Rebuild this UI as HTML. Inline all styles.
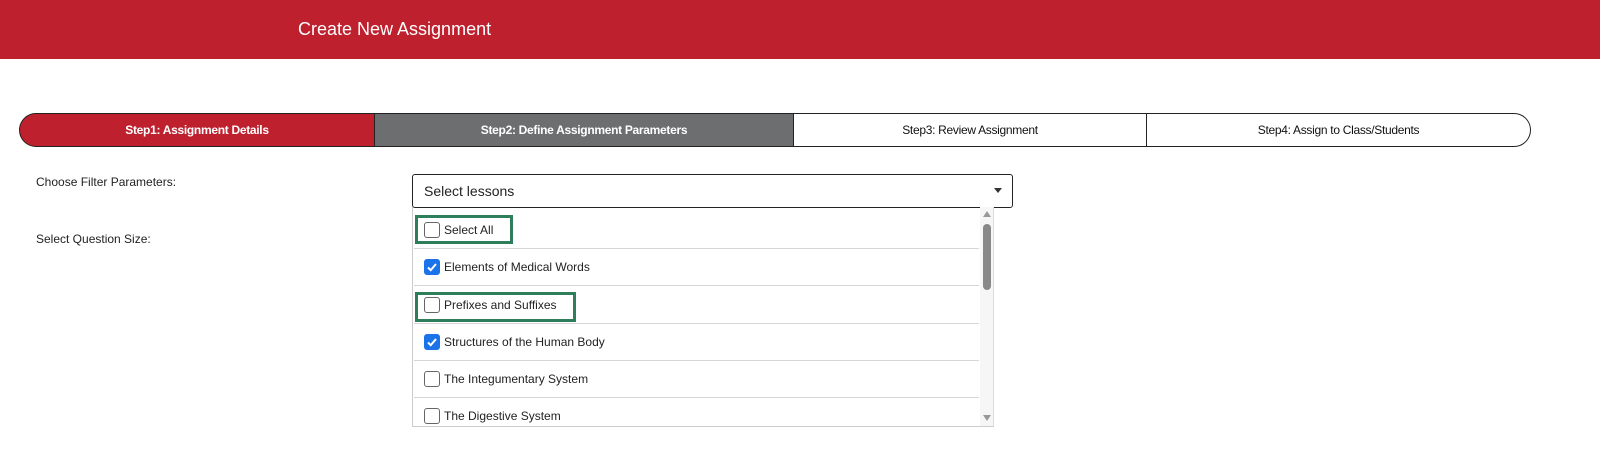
<!DOCTYPE html>
<html><head><style>
*{margin:0;padding:0;box-sizing:border-box}
body{width:1600px;height:451px;background:#fff;font-family:"Liberation Sans",sans-serif;position:relative;overflow:hidden;color:#222}
.hdr{position:absolute;left:0;top:0;width:1600px;height:59px;background:#be202e}
.hdr span{position:absolute;left:298px;top:19px;color:#fff;font-size:18px}
.step{position:absolute;top:113px;height:34px;border:1px solid #222;font-size:12px;font-weight:bold;display:flex;align-items:center;justify-content:center;letter-spacing:-0.3px}
.lbl{position:absolute;left:36px;font-size:12px;color:#222}
.sel{position:absolute;left:412px;top:174px;width:601px;height:34px;border:1px solid #222;border-radius:3px;font-size:14px;padding:8px 11px}
.arrow{position:absolute;left:994px;top:188px;width:0;height:0;border-left:4px solid transparent;border-right:4px solid transparent;border-top:5px solid #333}
.dd{position:absolute;left:412px;top:207px;width:582px;height:220px;border-left:1px solid #ccc;border-right:1px solid #ddd;border-bottom:1px solid #ccc;overflow:hidden}
.row{position:absolute;left:1px;width:565px;height:37px;border-bottom:1px solid #d6d6d6;font-size:12px}
.row span{position:absolute;left:30px;top:50%;transform:translateY(-50%)}
.cb{position:absolute;left:10px;top:50%;margin-top:-8px;width:16px;height:16px;border:1.3px solid #666;border-radius:3px;background:#fff}
.cb.on{background:#1a73e8;border-color:#1a73e8}
.cb.on svg{position:absolute;left:1px;top:1px}
.sb{position:absolute;left:567px;top:0;width:14px;height:220px;background:#f6f6f6}
.thumb{position:absolute;left:3px;top:17px;width:8px;height:66px;background:#888;border-radius:4px}
.g{position:absolute;border:3px solid #2e7d5b}
</style></head><body>
<div class="hdr"><span>Create New Assignment</span></div>
<div class="step" style="left:19px;width:356px;background:#be202e;color:#fff;border-radius:17px 0 0 17px">Step1: Assignment Details</div>
<div class="step" style="left:374px;width:420px;background:#6d6e70;color:#fff">Step2: Define Assignment Parameters</div>
<div class="step" style="left:793px;width:354px;background:#fff;color:#111;font-weight:normal">Step3: Review Assignment</div>
<div class="step" style="left:1146px;width:385px;background:#fff;color:#111;font-weight:normal;border-radius:0 17px 17px 0">Step4: Assign to Class/Students</div>
<div class="lbl" style="top:175px">Choose Filter Parameters:</div>
<div class="lbl" style="top:232px">Select Question Size:</div>
<div class="sel">Select lessons</div>
<div class="arrow"></div>
<div class="dd">
<div class="row" style="top:5px"><div class="cb"></div><span>Select All</span></div>
<div class="row" style="top:42px"><div class="cb on"><svg width="12" height="12" viewBox="0 0 12 12"><path d="M2 6.5l2.7 2.7L10 3" stroke="#fff" stroke-width="2" fill="none"/></svg></div><span>Elements of Medical Words</span></div>
<div class="row" style="top:80px"><div class="cb"></div><span>Prefixes and Suffixes</span></div>
<div class="row" style="top:117px"><div class="cb on"><svg width="12" height="12" viewBox="0 0 12 12"><path d="M2 6.5l2.7 2.7L10 3" stroke="#fff" stroke-width="2" fill="none"/></svg></div><span>Structures of the Human Body</span></div>
<div class="row" style="top:154px"><div class="cb"></div><span>The Integumentary System</span></div>
<div class="row" style="top:191px"><div class="cb"></div><span>The Digestive System</span></div>
<div class="sb"><div style="position:absolute;left:3px;top:4px;border-left:4px solid transparent;border-right:4px solid transparent;border-bottom:6px solid #999"></div><div class="thumb"></div><div style="position:absolute;left:3px;top:208px;border-left:4px solid transparent;border-right:4px solid transparent;border-top:6px solid #999"></div></div>
</div>
<div class="g" style="left:415px;top:215px;width:98px;height:29px"></div>
<div class="g" style="left:415px;top:292px;width:161px;height:30px"></div>
</body></html>
